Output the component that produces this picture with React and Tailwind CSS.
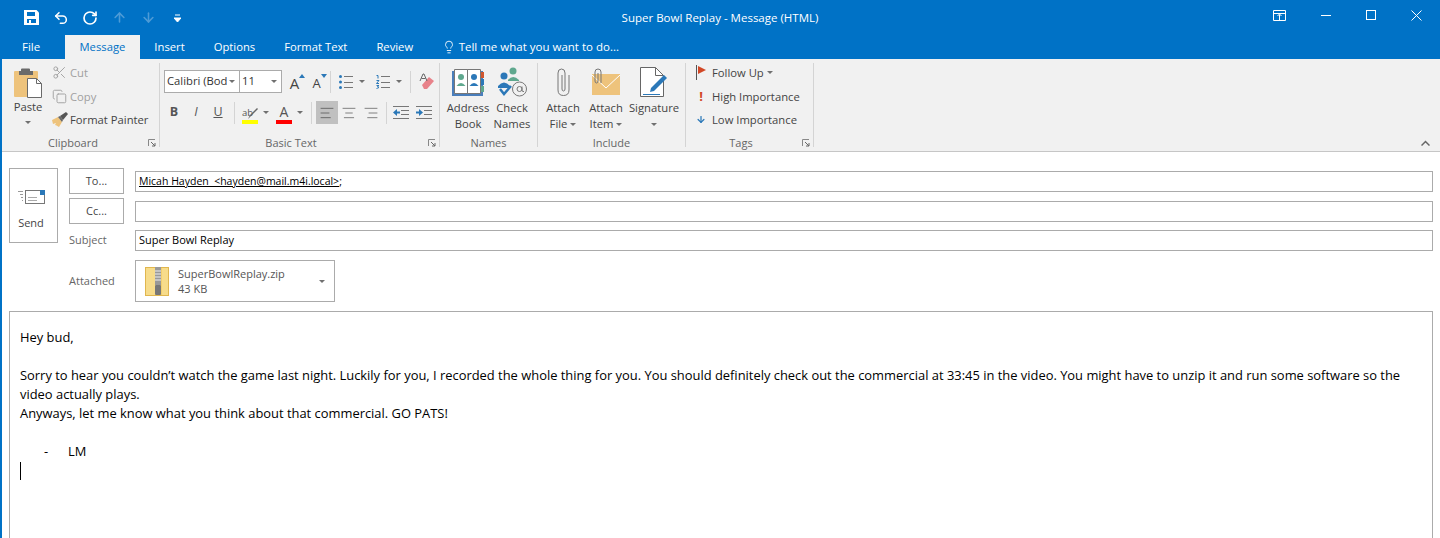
import React from 'react';
import { Undo2, RotateCw, ArrowUp, ArrowDown, Lightbulb, Scissors, Copy, AlignLeft, AlignCenter, AlignRight } from 'lucide-react';

const ui = { fontFamily: '"Open Sans", "Noto Sans", sans-serif' };

const Caret = ({ className = '' }) => (
    <svg width="6" height="3" viewBox="0 0 6 3" className={`shrink-0 ${className}`}>
        <path d="M0 0h6L3 3z" fill="#707070" />
    </svg>
);

const SaveIcon = () => (
    <svg width="15" height="15" viewBox="0 0 15 15">
        <path d="M0 0h12.500L15 2.500V15H0z" fill="#fff" />
        <rect x="3" y="2" width="8" height="4" fill="#0072c6" />
        <rect x="3" y="9" width="9" height="4" fill="#0072c6" />
        <rect x="5" y="10" width="2" height="3" fill="#fff" />
    </svg>
);

const PasteIcon = () => (
    <svg width="30" height="30" viewBox="0 0 30 30">
        <rect x="1" y="3" width="24" height="26" rx="1" fill="#eec37c" />
        <path d="M8 3V1.500q0-1 1-1h7q1 0 1 1V3h3v4H6V3z" fill="#6a6a6a" />
        <path d="M14.500 10.500h9l5 5V29.500h-14z" fill="#fff" stroke="#6a6a6a" />
        <path d="M23.500 10.500v5h5" fill="none" stroke="#6a6a6a" />
    </svg>
);

const BrushIcon = () => (
    <svg width="16" height="15" viewBox="0 0 16 15">
        <path d="M0 8l6-3 4 5-3 5q-3-2-4-2l1-2-3 1z" fill="#eec37c" />
        <path d="M6 5l2-1 3 4-1 2z" fill="#666" />
        <path d="M8 4l6-4 2 2-5 6z" fill="#555" />
    </svg>
);

const FontGrow = ({ small, up }) => (
    <div className="w-[21px] h-[22px] flex items-end justify-center relative">
        <span className={`${small ? 'text-[13px]' : 'text-[15px]'} leading-[19px] text-[#444]`}>A</span>
        <svg width="6" height="4" viewBox="0 0 6 4" className="absolute right-0 top-[3px]">
            <path d={up ? 'M0 4h6L3 0z' : 'M0 0h6L3 4z'} fill="#2b78b8" />
        </svg>
    </div>
);

const Bullets = () => (
    <svg width="14" height="14" viewBox="0 0 14 14">
        <g fill="#2b78b8">
            <circle cx="1.500" cy="1.500" r="1.500" />
            <circle cx="1.500" cy="7" r="1.500" />
            <circle cx="1.500" cy="12.500" r="1.500" />
        </g>
        <path d="M5 1.500h9M5 7.500h9M5 12.500h9" stroke="#777" />
    </svg>
);

const Numbers = () => (
    <svg width="14" height="14" viewBox="0 0 14 14">
        <path d="M.5 .5h1.500v3M.5 5.500H3L.5 8.500H3M.5 10.500H3L1.500 11.500 3 12.500.5 13.500" fill="none" stroke="#2b78b8" />
        <path d="M5 1.500h9M5 7.500h9M5 12.500h9" stroke="#777" />
    </svg>
);

const Eraser = () => (
    <svg width="16" height="18" viewBox="0 0 16 18">
        <path d="M3 12l7-8 5 4-7 8H5z" fill="#e8828a" />
        <path d="M1 8l3-7h1l3 7M2.500 5.500h4" fill="none" stroke="#666" />
    </svg>
);

const Highlighter = () => (
    <svg width="16" height="13" viewBox="0 0 16 13">
        <text x="0" y="9" fontSize="9.500" fill="#555" fontFamily="Open Sans">ab</text>
        <path d="M6 12l2-4 7-7 1 1-7 7z" fill="#666" />
    </svg>
);

const ColorBtn = ({ color, children }) => (
    <div className="flex flex-col items-center w-4 h-[22px] justify-end shrink-0">
        {children}
        <div className="h-1 w-4" style={{ background: color }} />
    </div>
);

const AlignIndent = ({ flip }) => (
    <svg width="16" height="14" viewBox="0 0 16 14" className="shrink-0">
        <path d="M0 .500h16M8 4.500h8M8 8.500h8M0 12.500h16" stroke="#777" />
        <path d={flip ? 'M0 5.500h3V3l4 3.500L3 10V7.500H0z' : 'M7 5.500H4V3L0 6.500 4 10V7.500h3z'} fill="#2b78b8" />
    </svg>
);

const AddressBook = () => (
    <svg width="32" height="28" viewBox="0 0 32 28">
        <path d="M0 3h31v25H0z" fill="#4a7ebb" />
        <path d="M2.500 1.500h13v24h-13zM15.500 1.500h13v24h-13z" fill="#fff" stroke="#777" />
        <rect x="29" y="4" width="3" height="6" fill="#d0562f" />
        <rect x="29" y="11" width="3" height="6" fill="#2b78b8" />
        <rect x="29" y="18" width="3" height="6" fill="#5fa88e" />
        <circle cx="9" cy="9" r="3" fill="#5fa88e" />
        <path d="M4.500 18q4.500-6 9 0z" fill="#5fa88e" />
        <circle cx="22" cy="9" r="3" fill="#2b78b8" />
        <path d="M17.500 18q4.500-6 9 0z" fill="#2b78b8" />
    </svg>
);

const CheckNames = () => (
    <svg width="31" height="30" viewBox="0 0 31 30">
        <circle cx="16" cy="4" r="3.500" fill="#5fa88e" />
        <path d="M11 13q5-6 11 0v1H11z" fill="#5fa88e" />
        <circle cx="7" cy="9" r="3.500" fill="#2b78b8" />
        <path d="M1 19q6-7 12 0v2H1z" fill="#2b78b8" />
        <path d="M3 22l4 5 7-8" fill="none" stroke="#2b78b8" strokeWidth="2.500" />
        <circle cx="22.500" cy="22" r="7" fill="none" stroke="#777" />
        <circle cx="22.500" cy="22" r="2.500" fill="none" stroke="#777" />
        <path d="M25 19.500V23q0 2 2 1.500" fill="none" stroke="#777" />
    </svg>
);

const PaperclipIcon = () => (
    <svg width="13" height="28" viewBox="0 0 13 28">
        <path d="M12 7v15q0 5.500-5.500 5.500T1 22V5q0-4 3.500-4T8 5v16q0 2-1.500 2T5 21V7" fill="none" stroke="#777" />
    </svg>
);

const EnvelopeClip = () => (
    <svg width="29" height="27" viewBox="0 0 29 27">
        <rect x="0" y="6" width="28" height="21" fill="#eec37c" />
        <path d="M0 7l14 13L28 7" fill="none" stroke="#fff" />
        <path d="M9 15V4q0-3-3-3T3 4v9q0 2 1.500 2T6 13V5" fill="none" stroke="#777" />
    </svg>
);

const Signature = () => (
    <svg width="28" height="30" viewBox="0 0 28 30">
        <path d="M.5.5h15l8 8v21H.5z" fill="#fff" stroke="#666" />
        <path d="M15.500.5v8h8" fill="none" stroke="#666" />
        <path d="M11 21L24 8l3 3-13 13-4 1z" fill="#2b78b8" />
        <path d="M3 27.500h17" stroke="#2b78b8" />
    </svg>
);

const ZipIcon = () => (
    <svg width="24" height="29" viewBox="0 0 24 29">
        <rect x=".5" y=".5" width="23" height="28" fill="#f7dc8b" stroke="#e0b64f" />
        <rect x="14" y="1" width="3" height="27" fill="#f3cf6e" />
        <rect x="10" y="0" width="6" height="18" fill="#999" />
        <path d="M10 4h6M10 7h6M10 10h6M10 13h6" stroke="#eee" />
        <rect x="10" y="18" width="6" height="10" rx="1" fill="#777" />
    </svg>
);

const SendIcon = () => (
    <svg width="27" height="15" viewBox="0 0 27 15">
        <rect x="7.500" y=".5" width="19" height="13" fill="#fff" stroke="#777" />
        <rect x="22" y="0" width="5" height="5" fill="#2b78b8" />
        <path d="M10 7.500h9M10 10.500h9" stroke="#aaa" />
        <path d="M0 1.500h5M2 4.500h3M3 7.500h2M4 10.500h1" stroke="#999" />
    </svg>
);

const Launcher = () => (
    <svg width="8" height="8" viewBox="0 0 8 8" className="absolute right-[3px] bottom-0">
        <path d="M.5 7V.5H7" fill="none" stroke="#888" />
        <path d="M3 3l4 4M7 4v3H4" fill="none" stroke="#666" />
    </svg>
);

const Group = ({ label, width, launcher, children }) => (
    <div className={`${width} relative flex flex-col border-r border-[#d4d4d4] mt-[4px] mb-[4px] shrink-0`}>
        <div className="flex-1 flex min-h-0">{children}</div>
        <div className={`h-[15px] -mb-[3px] text-center text-[11px] leading-[15px] text-[#666] ${launcher ? 'pr-[17px]' : ''}`}>{label}</div>
        {launcher && <Launcher />}
    </div>
);

const BigButton = ({ icon, lines, caret, width }) => (
    <div className={`${width} flex flex-col items-center text-[11.25px] leading-[16px] text-[#444]`}>
        <div className="h-[37px] flex items-center justify-center shrink-0">{icon}</div>
        <div className="whitespace-nowrap">{lines[0]}</div>
        <div className="whitespace-nowrap flex items-center gap-[3px] h-[16px]">
            {lines[1]}
            {caret && <Caret />}
        </div>
    </div>
);

const Tab = ({ children, active }) => (
    <div
        className={`h-[24px] px-[14.5px] flex items-center text-[11.25px] ${
            active ? 'bg-[#f1f1f1] text-[#0072c6]' : 'text-white'
        }`}
    >
        {children}
    </div>
);

const Sep = ({ className = '' }) => <div className={`w-px h-[22px] bg-[#d4d4d4] shrink-0 ${className}`} />;

const Cell = ({ children, className = '' }) => (
    <div className={`w-[22px] h-[23px] flex items-center justify-center shrink-0 text-[12.5px] text-[#555] ${className}`}>{children}</div>
);

const FieldBtn = ({ children }) => (
    <div className="w-[55px] h-[26px] border border-[#ababab] flex items-center justify-center text-[11px] text-[#444]">
        {children}
    </div>
);

const Field = ({ children }) => (
    <div className="flex-1 h-[21px] border border-[#ababab] px-[3px] flex items-center text-[11px] leading-[14px] text-black">
        {children}
    </div>
);

export default function App() {
    return (
        <div className="w-[1440px] h-[538px] overflow-hidden bg-white border-l-2 border-[#0072c6] flex flex-col" style={ui}>
            {/* Title bar */}
            <div className="h-[35px] bg-[#0072c6] grid grid-cols-[1fr_auto_1fr] items-center text-white shrink-0 -ml-[2px]">
                <div className="flex items-center pl-[24px]">
                    <SaveIcon />
                    <Undo2 size={16} strokeWidth={2.250} className="ml-[14px]" />
                    <RotateCw size={16} strokeWidth={2.500} className="ml-[13px]" />
                    <ArrowUp size={15} strokeWidth={2.500} className="text-[#4d9bd6] ml-[14px]" />
                    <ArrowDown size={15} strokeWidth={2.500} className="text-[#4d9bd6] ml-[14px]" />
                    <svg width="7" height="8" viewBox="0 0 7 8" className="ml-[18px]">
                        <path d="M1 1h5M0 4h7L3.500 8z" stroke="#fff" fill="#fff" strokeWidth="1" />
                    </svg>
                </div>
                <div className="text-center text-[11.5px]">Super Bowl Replay - Message (HTML)</div>
                <div className="flex items-center justify-end gap-[35px] pr-[18px] pb-[5px]">
                    <svg width="13" height="11" viewBox="0 0 13 11">
                        <path d="M.5.500h12v10H.5zM.5 3.500h12M6.500 10V5M4.500 6l2-2 2 2" fill="none" stroke="#fff" />
                    </svg>
                    <div className="w-[10px] h-px bg-white" />
                    <div className="w-[10px] h-[10px] border border-white" />
                    <svg width="11" height="11" viewBox="0 0 11 11">
                        <path d="M.5.500l10 10M10.500.500l-10 10" stroke="#fff" />
                    </svg>
                </div>
            </div>

            {/* Tabs */}
            <div className="h-[24px] bg-[#0072c6] flex items-center pl-[6px] shrink-0">
                <div className="w-[57px] text-[11.5px] text-white pl-[14px]">File</div>
                <Tab active>Message</Tab>
                <Tab>Insert</Tab>
                <Tab>Options</Tab>
                <Tab>Format Text</Tab>
                <Tab>Review</Tab>
                <div className="flex items-center gap-[3px] text-white text-[11.5px] pl-[14px]">
                    <Lightbulb size={14} strokeWidth={1.500} />
                    Tell me what you want to do...
                </div>
            </div>

            {/* Ribbon */}
            <div className="h-[93px] bg-[#f1f1f1] border-b border-[#c6c6c6] flex pl-[2px] relative shrink-0">
                <Group label="Clipboard" width="w-[156px]" launcher>
                    <div className="w-[48px] flex flex-col items-center pt-[5px] text-[11.25px] text-[#444]">
                        <PasteIcon />
                        <div className="leading-[16px] mt-px">Paste</div>
                        <Caret className="mt-[6px]" />
                    </div>
                    <div className="flex flex-col text-[11.25px] leading-[23.5px] -mt-[2px]">
                        <div className="flex items-center gap-[3px] text-[#a0a0a0]">
                            <Scissors size={15} strokeWidth={1.500} />Cut
                        </div>
                        <div className="flex items-center gap-[3px] text-[#a0a0a0]">
                            <Copy size={15} strokeWidth={1.500} />Copy
                        </div>
                        <div className="flex items-center gap-[2px] text-[#444] whitespace-nowrap">
                            <BrushIcon />Format Painter
                        </div>
                    </div>
                </Group>

                <Group label="Basic Text" width="w-[280px]" launcher>
                    <div className="flex flex-col pl-[4px] pt-[7px] gap-[8px]">
                        <div className="flex items-center h-[23px]">
                            <div className="w-[76px] h-[23px] border border-[#ababab] bg-white flex items-center justify-between pl-[2px] pr-[4px] text-[11.25px] text-[#333] overflow-hidden">
                                <span className="whitespace-nowrap w-[60px] overflow-hidden">Calibri (Body)</span>
                                <Caret />
                            </div>
                            <div className="w-[42px] h-[23px] border border-l-0 border-[#ababab] bg-white flex items-center justify-between pl-[2px] pr-[4px] text-[11.25px] text-[#333]">
                                <span>11</span>
                                <Caret />
                            </div>
                            <div className="flex ml-[2px] gap-px">
                                <FontGrow up />
                                <FontGrow small />
                            </div>
                            <Sep className="ml-[3px] mr-[8px]" />
                            <Bullets />
                            <Caret className="ml-[6px]" />
                            <div className="w-[11px] shrink-0" />
                            <Numbers />
                            <Caret className="ml-[6px]" />
                            <Sep className="ml-[8px] mr-[8px]" />
                            <Eraser />
                        </div>
                        <div className="flex items-center h-[23px] -ml-[1px]">
                            <Cell className="font-bold">B</Cell>
                            <Cell className="italic">I</Cell>
                            <Cell className="underline">U</Cell>
                            <Sep className="ml-[5px] mr-[7px]" />
                            <ColorBtn color="#ffff00">
                                <Highlighter />
                            </ColorBtn>
                            <Caret className="ml-[5px]" />
                            <div className="w-[7px] shrink-0" />
                            <ColorBtn color="#ff0000">
                                <span className="text-[14px] leading-[16px] text-[#555]">A</span>
                            </ColorBtn>
                            <Caret className="ml-[5px]" />
                            <Sep className="ml-[8px] mr-[4px]" />
                            <Cell className="bg-[#c0c0c0]">
                                <AlignLeft size={16} strokeWidth={1.200} className="text-[#555]" />
                            </Cell>
                            <Cell><AlignCenter size={16} strokeWidth={1.200} className="text-[#666]" /></Cell>
                            <Cell><AlignRight size={16} strokeWidth={1.200} className="text-[#666]" /></Cell>
                            <Sep className="ml-[4px] mr-[6px]" />
                            <AlignIndent />
                            <div className="w-[7px] shrink-0" />
                            <AlignIndent flip />
                        </div>
                    </div>
                </Group>

                <Group label="Names" width="w-[98px]">
                    <div className="flex pl-[6px]">
                        <BigButton width="w-[44px]" icon={<AddressBook />} lines={['Address', 'Book']} />
                        <BigButton width="w-[44px]" icon={<CheckNames />} lines={['Check', 'Names']} />
                    </div>
                </Group>

                <Group label="Include" width="w-[148px]">
                    <div className="flex pl-[3px] gap-px">
                        <BigButton width="w-[44px]" caret icon={<PaperclipIcon />} lines={['Attach', 'File']} />
                        <BigButton width="w-[40px]" caret icon={<EnvelopeClip />} lines={['Attach', 'Item']} />
                        <BigButton width="w-[54px]" caret icon={<Signature />} lines={['Signature', '']} />
                    </div>
                </Group>

                <Group label="Tags" width="w-[128px]" launcher>
                    <div className="flex flex-col pl-[10px] text-[11.25px] leading-[23.5px] text-[#444] -mt-[2px]">
                        <div className="flex items-center gap-[6px]">
                            <svg width="10" height="15" viewBox="0 0 10 15">
                                <path d="M.5 0v15" stroke="#555" />
                                <path d="M2 1l8 4-8 4z" fill="#d24726" />
                            </svg>
                            Follow Up
                            <Caret className="-ml-[3px]" />
                        </div>
                        <div className="flex items-center gap-[6px]">
                            <span className="w-[10px] text-center text-[#d24726] font-bold text-[13px]">!</span>
                            High Importance
                        </div>
                        <div className="flex items-center gap-[6px]">
                            <ArrowDown size={11} strokeWidth={3} className="text-[#2b78b8] w-[10px]" />
                            Low Importance
                        </div>
                    </div>
                </Group>

                <svg width="9" height="6" viewBox="0 0 9 6" className="absolute right-[10px] bottom-[5px]">
                    <path d="M.5 5.500l4-4 4 4" fill="none" stroke="#666" strokeWidth="1.500" />
                </svg>
            </div>

            {/* Header fields */}
            <div className="flex pl-[7px] pr-[7px] pt-[16px] gap-[11px] shrink-0">
                <div className="w-[49px] h-[75px] border border-[#ababab] flex flex-col items-center text-[11px] text-[#444]">
                    <div className="mt-[21px] -ml-[4px]"><SendIcon /></div>
                    <div className="mt-[10px] -ml-[5px]">Send</div>
                </div>
                <div className="flex-1 flex flex-col">
                    <div className="flex items-center gap-[11px] h-[26px]">
                        <FieldBtn>To...</FieldBtn>
                        <Field>
                            <span className="text-[10.5px] whitespace-pre underline">Micah Hayden  &lt;hayden@mail.m4i.local&gt;</span>
                            <span className="text-[10.5px]">;</span>
                        </Field>
                    </div>
                    <div className="flex items-center gap-[11px] h-[26px] mt-[4px]">
                        <FieldBtn>Cc...</FieldBtn>
                        <Field />
                    </div>
                    <div className="flex items-center gap-[11px] h-[26px] mt-[3px]">
                        <div className="w-[55px] text-[11px] text-[#666]">Subject</div>
                        <Field>Super Bowl Replay</Field>
                    </div>
                    <div className="flex items-center gap-[11px] mt-[7px]">
                        <div className="w-[55px] text-[11px] text-[#666]">Attached</div>
                        <div className="w-[200px] h-[42px] border border-[#ababab] flex items-center pl-[9px] pr-[9px]">
                            <ZipIcon />
                            <div className="flex-1 pl-[9px] text-[11px] leading-[15px] text-[#555]">
                                <div>SuperBowlReplay.zip</div>
                                <div>43 KB</div>
                            </div>
                            <Caret />
                        </div>
                    </div>
                </div>
            </div>

            {/* Body */}
            <div className="flex-1 ml-[7px] mr-[7px] mt-[9px] border border-[#ababab] border-b-0 px-[10px] pt-[16px] text-[12.92px] leading-[19px] text-black">
                <p>Hey bud,</p>
                <p className="mt-[19px]">
                    Sorry to hear you couldn’t watch the game last night. Luckily for you, I recorded the whole thing for you. You should definitely check out the commercial at 33:45 in the video. You might have to unzip it and run some software so the video actually plays.
                </p>
                <p>Anyways, let me know what you think about that commercial. GO PATS!</p>
                <div className="mt-[19px] flex">
                    <span className="w-[48px] pl-[24px]">-</span>
                    <span>LM</span>
                </div>
                <div className="w-px h-[18px] bg-black mt-px" />
            </div>
        </div>
    );
}
